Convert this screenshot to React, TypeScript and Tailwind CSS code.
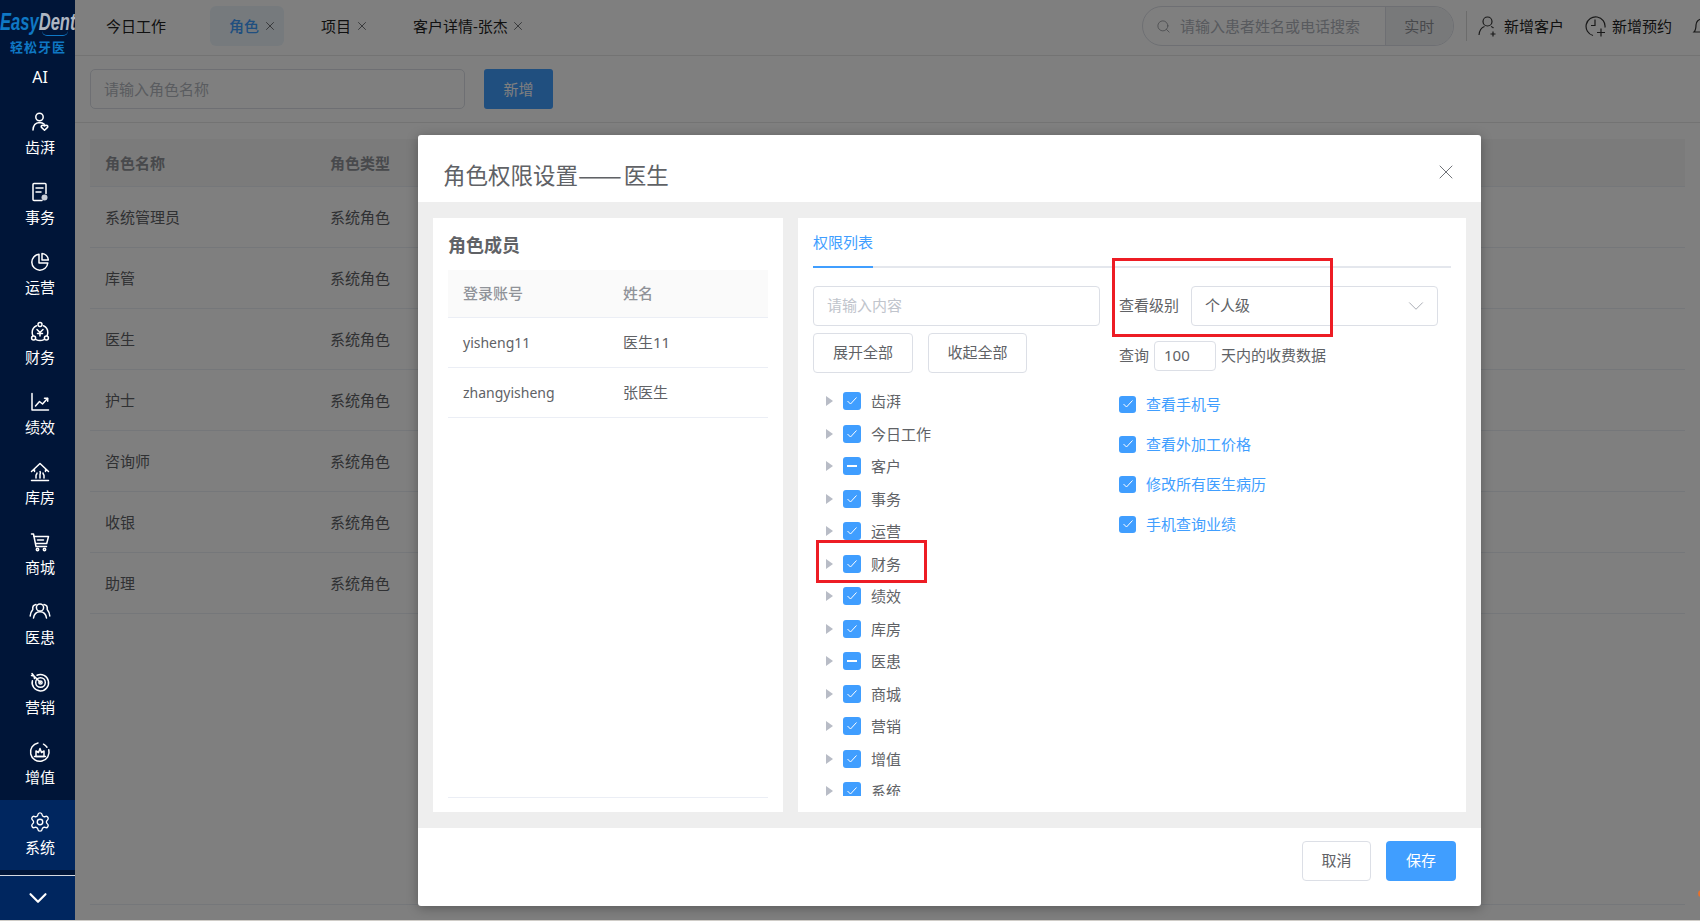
import React from "react";
import { ChevronDown, Settings, X, Search } from "lucide-react";

const Icon = ({ children }: { children: React.ReactNode }) => (
  <svg
    width="22"
    height="22"
    viewBox="0 0 22 22"
    fill="none"
    stroke="currentColor"
    strokeWidth="1.5"
    strokeLinecap="round"
    strokeLinejoin="round"
  >
    {children}
  </svg>
);

const navItems = [
  {
    label: "齿湃",
    icon: (
      <Icon>
        <circle cx="10.5" cy="6" r="3.7" />
        <path d="M4 19c.2-4.6 2.8-7.4 6.5-7.6 2 0 3.6.6 4.8 1.8" />
        <path d="M15.5 19.2l-3-2.8c-1.2-1.4 1.4-3.2 3-1.4 1.6-1.8 4.2 0 3 1.4z" />
      </Icon>
    ),
  },
  {
    label: "事务",
    icon: (
      <Icon>
        <path d="M13 19.5H5a1 1 0 0 1-1-1v-15a1 1 0 0 1 1-1h11a1 1 0 0 1 1 1v9" />
        <path d="M7 7h7M7 11h5" />
        <circle cx="15.5" cy="16.5" r="3" fill="#c9ced8" stroke="none" />
      </Icon>
    ),
  },
  {
    label: "运营",
    icon: (
      <Icon>
        <path d="M10 3.2a8 8 0 1 0 8.8 8.8h-8.8z" />
        <path d="M13 2.6a7 7 0 0 1 6.4 6.4H13z" />
      </Icon>
    ),
  },
  {
    label: "财务",
    icon: (
      <Icon>
        <path d="M7.5 4.8C4.8 6 3.2 8.6 3.2 11.5c0 1.2.2 2.2.7 3.2M14.5 4.8c2.7 1.2 4.3 3.8 4.3 6.7 0 1.2-.2 2.2-.7 3.2M7 18.6c2.4 1.2 5.6 1.2 8 0" />
        <circle cx="11" cy="3.6" r="2" />
        <circle cx="4.6" cy="17" r="2" />
        <circle cx="17.4" cy="17" r="2" />
        <path d="M8 8.5l3 3 3-3M11 11.5V15M8.5 12.5h5" />
      </Icon>
    ),
  },
  {
    label: "绩效",
    icon: (
      <Icon>
        <path d="M3 2.5v16.5h16.5" />
        <path d="M6.5 15l4-4.5 3 2.5 5-5.5" />
        <path d="M15.5 7.2h3.2v3" />
      </Icon>
    ),
  },
  {
    label: "库房",
    icon: (
      <Icon>
        <path d="M2.5 10.5L11 2.5l8.5 8M5.5 8.5v2M16.5 8.5v2" />
        <path d="M2.5 19.5h17" />
        <path d="M7 17v-2.5c0-1 1-1 1-2.5M11 17v-3.5c0-1 1-1.5 0-3M15 17v-2.5c0-1-1-1-1-2.5" />
      </Icon>
    ),
  },
  {
    label: "商城",
    icon: (
      <Icon>
        <path d="M2.5 3h2l2.5 12.5h10.5" />
        <path d="M5 5.5h14.5l-1.8 7H7" />
        <path d="M8.5 9h6" />
        <circle cx="8.5" cy="18.5" r="1.2" />
        <circle cx="15.5" cy="18.5" r="1.2" />
      </Icon>
    ),
  },
  {
    label: "医患",
    icon: (
      <Icon>
        <circle cx="11" cy="6.5" r="3.6" />
        <path d="M4.5 17c.6-4 3-6.3 6.5-6.3s5.9 2.3 6.5 6.3" />
        <path d="M7 3.6c-2.3.4-3.6 2.2-3.2 4.8-1.6 1.8-2.4 4-2.6 6.6M15 3.6c2.3.4 3.6 2.2 3.2 4.8 1.6 1.8 2.4 4 2.6 6.6" />
      </Icon>
    ),
  },
  {
    label: "营销",
    icon: (
      <Icon>
        <path d="M8 4.2a8.2 8.2 0 1 1-4.6 5.5" />
        <circle cx="11.5" cy="11.5" r="4.8" />
        <circle cx="11.5" cy="11.5" r="1.6" />
        <path d="M11.5 11.5L5 5M2.5 4.5L5 5l.5 2.5M3 2.5L5 5" />
      </Icon>
    ),
  },
  {
    label: "增值",
    icon: (
      <Icon>
        <path d="M9 1.9a9.3 9.3 0 1 0 10.8 6.8" />
        <path d="M14.5 3.2a9.3 9.3 0 0 1 3.5 3" />
        <path d="M7 15.5v-5.5l2.5 1.5L11 7.5l1.500 4L15 10v5.5z" />
        <path d="M5.5 15.5h11" />
      </Icon>
    ),
  },
];

const treeItems = [
  { name: "齿湃" },
  { name: "今日工作" },
  { name: "客户", partial: true },
  { name: "事务" },
  { name: "运营" },
  { name: "财务" },
  { name: "绩效" },
  { name: "库房" },
  { name: "医患", partial: true },
  { name: "商城" },
  { name: "营销" },
  { name: "增值" },
  { name: "系统" },
];

const roles = ["系统管理员", "库管", "医生", "护士", "咨询师", "收银", "助理"];
const extras = ["查看手机号", "查看外加工价格", "修改所有医生病历", "手机查询业绩"];

const Checkbox = ({ partial, small }: { partial?: boolean; small?: boolean }) => (
  <span
    className={`flex shrink-0 items-center justify-center rounded-[3px] bg-[#409eff] ${
      small ? "h-[17px] w-[17px]" : "h-[18px] w-[18px]"
    }`}
  >
    {partial ? (
      <span className="h-[2px] w-[10px] bg-white" />
    ) : (
      <svg width="12" height="10" viewBox="0 0 12 10" fill="none" stroke="#fff" strokeWidth="1">
        <path d="M1.5 5l3 3 6-6.5" />
      </svg>
    )}
  </span>
);

const Sidebar = () => (
  <aside className="relative z-20 flex h-full w-[75px] shrink-0 flex-col bg-[#001538] text-white">
    <div className="relative h-[58px] overflow-hidden">
      <div className="absolute left-0 top-[9px] origin-left scale-x-[0.72] whitespace-nowrap font-['Liberation_Sans',sans-serif] text-[23px] font-bold italic leading-[26px]">
        <span className="text-[#0f78c4]">Easy</span>
        <span className="text-[#aeb6c2]">Dent</span>
      </div>
      <div className="absolute left-[42px] top-[31px] h-[5px] w-[26px] rounded-b-full border-b border-[#0f78c4]" />
      <div className="absolute left-[9px] top-[38px] w-[58px] text-center text-[13px] font-bold leading-[18px] tracking-[1px] text-[#0f78c4]">
        轻松牙医
      </div>
    </div>
    <div className="h-[42px] pl-[5px] pt-[9px] text-center text-[16px] leading-[20px]">AI</div>
    {navItems.map((item) => (
      <div key={item.label} className="flex h-[70px] flex-col items-center pl-[5px] pt-[11px]">
        {item.icon}
        <span className="mt-[4px] text-[15px] leading-[20px]">{item.label}</span>
      </div>
    ))}
    <div className="flex h-[70px] flex-col items-center bg-[#00265f] pl-[5px] pt-[11px]">
      <Settings size={22} strokeWidth={1.5} />
      <span className="mt-[4px] text-[15px] leading-[20px]">系统</span>
    </div>
    <div className="mt-[5px] flex h-[45px] items-center justify-center border-t border-[#d5dae2] bg-[#00265f]">
      <ChevronDown size={30} strokeWidth={1.7} />
    </div>
  </aside>
);

const TopBar = () => (
  <header className="flex h-[56px] items-center whitespace-nowrap border-b border-[#e6e6e6] pb-[3px] pl-[31px]">
    <span className="shrink-0 text-[15px] leading-[20px] text-[#222]">今日工作</span>
    <div className="ml-[44px] flex h-[40px] w-[74px] shrink-0 items-center rounded-[6px] bg-[#ecf5fb] pl-[19px] text-[15px] font-medium leading-[20px] text-[#409eff]">
      角色
      <X size={14} strokeWidth={1.5} className="ml-[4px] text-[#606266]" />
    </div>
    <span className="ml-[37px] shrink-0 text-[15px] leading-[20px] text-[#222]">项目</span>
    <X size={14} strokeWidth={1.5} className="ml-[4px] shrink-0 text-[#606266]" />
    <span className="ml-[44px] shrink-0 text-[15px] leading-[20px] text-[#222]">客户详情-张杰</span>
    <X size={14} strokeWidth={1.5} className="ml-[3px] shrink-0 text-[#606266]" />
    <div className="ml-[617px] flex h-[40px] w-[312px] shrink-0 items-center rounded-full border border-[#dcdfe6]">
      <Search size={15} strokeWidth={1.3} className="ml-[13px] text-[#909399]" />
      <span className="ml-[9px] w-[204px] text-[15px] leading-[20px] text-[#b0b4bc]">请输入患者姓名或电话搜索</span>
      <div className="ml-[1px] flex h-full flex-1 items-center justify-center rounded-r-full border-l border-[#dcdfe6] bg-[#f0f2f5] text-[15px] leading-[20px] text-[#909399]">
        实时
      </div>
    </div>
    <div className="ml-[12px] h-[30px] w-px shrink-0 bg-[#d8d8d8]" />
    <svg className="ml-[11px] shrink-0" width="20" height="22" viewBox="0 0 20 22" fill="none" stroke="#333" strokeWidth="1.2">
      <circle cx="9.5" cy="6.5" r="4.5" />
      <path d="M1 20c.4-4.5 2.6-7.5 5.5-8.5M13 11.5c1 .3 1.8.8 2.5 1.5M15 16.5v5M12.5 19h5" />
    </svg>
    <span className="ml-[6px] shrink-0 text-[15px] leading-[20px] text-[#222]">新增客户</span>
    <svg className="ml-[21px] shrink-0" width="22" height="22" viewBox="0 0 22 22" fill="none" stroke="#333" strokeWidth="1.2">
      <path d="M8 20.5a9.5 9.5 0 1 1 12-8" />
      <path d="M10 4.5v6H6M16 13.5v8M12 17.5h8" />
    </svg>
    <span className="ml-[5px] shrink-0 text-[15px] leading-[20px] text-[#222]">新增预约</span>
    <svg className="ml-[20px] shrink-0" width="20" height="22" viewBox="0 0 20 22" fill="none" stroke="#333" strokeWidth="1.2">
      <path d="M2 17c1.5-1.5 2-3 2-7a6 6 0 0 1 12 0c0 4 .5 5.5 2 7z" />
    </svg>
  </header>
);

const RoleTable = () => (
  <main className="min-w-0 flex-1 overflow-hidden bg-white">
    <TopBar />
    <div className="flex h-[67px] items-start border-b border-[#e6e6e6] pl-[15px] pt-[13px]">
      <div className="flex h-[40px] w-[375px] items-center rounded-[5px] border border-[#dcdfe6] pb-[1px] pl-[13px] text-[15px] leading-[20px] text-[#b4b8c0]">
        请输入角色名称
      </div>
      <button className="ml-[19px] h-[40px] w-[69px] rounded-[3px] bg-[#409eff] text-[15px] text-white">新增</button>
    </div>
    <div className="px-[15px] pt-[16px]">
      <div className="flex h-[48px] items-center border-b border-[#ebeef5] bg-[#f7f7f7] pt-[1px] text-[15px] font-bold text-[#909399]">
        <span className="ml-[15px] w-[225px]">角色名称</span>
        <span>角色类型</span>
      </div>
      {roles.map((role) => (
        <div key={role} className="flex h-[61px] items-center border-b border-[#ebeef5] text-[15px] text-[#606266]">
          <span className="ml-[15px] w-[225px]">{role}</span>
          <span>系统角色</span>
        </div>
      ))}
      <div className="mt-[290px] border-b border-[#ebeef5]" />
    </div>
  </main>
);

const MemberPanel = () => (
  <section className="flex h-full w-[350px] flex-col bg-white px-[15px] pt-[15px]">
    <h3 className="text-[18px] font-bold leading-[24px] text-[#606266]">角色成员</h3>
    <div className="mt-[13px] flex h-[48px] items-center border-b border-[#ebeef5] bg-[#fafafa] text-[15px] font-medium text-[#909399]">
      <span className="ml-[15px] w-[160px]">登录账号</span>
      <span>姓名</span>
    </div>
    <div className="flex h-[50px] items-center border-b border-[#ebeef5] text-[15px] text-[#606266]">
      <span className="ml-[15px] w-[160px] text-[14px]">yisheng11</span>
      <span>医生11</span>
    </div>
    <div className="flex h-[50px] items-center border-b border-[#ebeef5] text-[15px] text-[#606266]">
      <span className="ml-[15px] w-[160px] text-[14px]">zhangyisheng</span>
      <span>张医生</span>
    </div>
    <div className="mt-auto mb-[14px] border-b border-[#ebeef5]" />
  </section>
);

const PermissionPanel = () => (
  <section className="h-full w-[668px] bg-white px-[15px]">
    <div className="h-[50px] border-b-2 border-[#e4e7ed]">
      <div className="h-[50px] w-[60px] border-b-2 border-[#409eff] pt-[14px] text-[15px] leading-[20px] text-[#409eff]">
        权限列表
      </div>
    </div>
    <div className="mt-[18px] flex">
      <div className="w-[287px]">
        <div className="flex h-[40px] items-center rounded-[4px] border border-[#dcdfe6] pb-[1px] pl-[13px] text-[15px] text-[#c0c4cc]">
          请输入内容
        </div>
        <div className="mt-[7px] flex gap-[15px]">
          <button className="h-[40px] w-[100px] rounded-[4px] border border-[#dcdfe6] pb-[1px] text-[15px] text-[#606266]">
            展开全部
          </button>
          <button className="h-[40px] w-[99px] rounded-[4px] border border-[#dcdfe6] pb-[1px] text-[15px] text-[#606266]">
            收起全部
          </button>
        </div>
        <div className="mt-[12px] h-[411px] overflow-hidden">
          {treeItems.map((item) => (
            <div key={item.name} className="flex h-[32.5px] items-center pl-[13px]">
              <span className="h-0 w-0 border-y-[5px] border-l-[7px] border-y-transparent border-l-[#b8bcc6]" />
              <span className="ml-[10px]">
                <Checkbox partial={item.partial} />
              </span>
              <span className="ml-[10px] text-[15px] leading-[20px] text-[#606266]">{item.name}</span>
            </div>
          ))}
        </div>
      </div>
      <div className="ml-[19px] flex-1">
        <div className="flex h-[40px] items-center text-[15px] text-[#606266]">
          <span className="pb-[1px]">查看级别</span>
          <div className="ml-[12px] flex h-[40px] w-[247px] items-center justify-between rounded-[4px] border border-[#dcdfe6] pl-[13px] pr-[8px]">
            <span className="pb-[1px]">个人级</span>
            <ChevronDown size={26} strokeWidth={0.9} className="text-[#a8abb2]" />
          </div>
        </div>
        <div className="mt-[15px] flex h-[30px] items-center pb-[1px] text-[15px] text-[#606266]">
          查询
          <div className="ml-[5px] flex h-[30px] w-[62px] items-center rounded-[4px] border border-[#dcdfe6] pl-[9px]">
            100
          </div>
          <span className="ml-[5px]">天内的收费数据</span>
        </div>
        <div className="mt-[13px]">
          {extras.map((text) => (
            <div key={text} className="flex h-[40px] items-center">
              <Checkbox small />
              <span className="ml-[10px] text-[15px] leading-[20px] text-[#409eff]">{text}</span>
            </div>
          ))}
        </div>
      </div>
    </div>
  </section>
);

const RoleDialog = () => (
  <div className="absolute left-[418px] top-[135px] z-30 flex h-[771px] w-[1063px] flex-col rounded-[3px] bg-white shadow-[0_2px_12px_rgba(0,0,0,0.3)]">
    <div className="flex h-[67px] shrink-0 items-start justify-between pl-[25px] pr-[23px] pt-[24px]">
      <h2 className="font-['Noto_Sans_CJK_SC',sans-serif] text-[22.5px] leading-[30px] text-[#606266]">
        角色权限设置
        <span className="mr-[7px] inline-block origin-left scale-x-[1.16]">——</span>
        <span className="ml-[1px]">医生</span>
      </h2>
      <X size={24} strokeWidth={1} className="mt-[1px] text-[#707378]" />
    </div>
    <div className="flex h-[626px] gap-[15px] bg-[#eeeeee] px-[15px] py-[16px]">
      <MemberPanel />
      <PermissionPanel />
    </div>
    <div className="flex flex-1 items-start justify-end gap-[15px] pr-[25px] pt-[13px]">
      <button className="h-[40px] w-[69px] rounded-[4px] border border-[#dcdfe6] pb-[1px] text-[15px] text-[#606266]">取消</button>
      <button className="h-[40px] w-[70px] rounded-[4px] bg-[#409eff] pb-[1px] text-[15px] text-white">保存</button>
    </div>
    {/* red annotation boxes from the original screenshot */}
    <div className="pointer-events-none absolute left-[398px] top-[405px] h-[43px] w-[111px] border-[3px] border-[#ed1c24]" />
    <div className="pointer-events-none absolute left-[694px] top-[123px] h-[79px] w-[221px] border-[3px] border-[#ed1c24]" />
  </div>
);

export default function App() {
  return (
    <div className="relative flex h-[921px] w-[1700px] overflow-hidden font-['Noto_Sans','Noto_Sans_CJK_SC',sans-serif]">
      <Sidebar />
      <RoleTable />
      <div className="absolute inset-0 z-10 bg-black/50" />
      <RoleDialog />
      <span className="absolute right-[-5px] top-[890px] z-20 h-[7px] w-[7px] rounded-full bg-[#e8702a]" />
      <div className="absolute inset-x-0 bottom-0 z-40 h-px bg-[#d0cdc8]" />
    </div>
  );
}
